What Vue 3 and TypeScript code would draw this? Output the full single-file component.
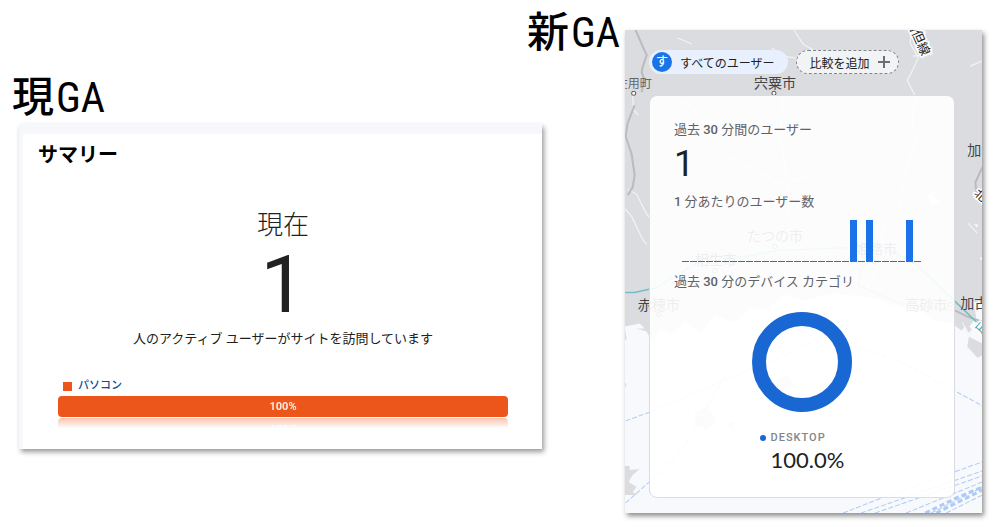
<script setup lang="ts">
interface MapLabel {
  text: string
  x: number
  y: number
  size: number
  rotate?: number
  color?: string
}

const labels: MapLabel[] = [
  { text: '佐用町', x: -9, y: 58, size: 12, color: '#666' },
  { text: '宍粟市', x: 129, y: 58, size: 14 },
  { text: '加', x: 342, y: 125, size: 14 },
  { text: 'たつの市', x: 122, y: 211, size: 14 },
  { text: '相生市', x: 70, y: 235, size: 14 },
  { text: '姫路市', x: 230, y: 224, size: 14 },
  { text: '赤穂市', x: 13, y: 279, size: 14 },
  { text: '高砂市', x: 280, y: 279, size: 14 },
  { text: '加古川', x: 335, y: 277, size: 14 },
]

const roadLabels: MapLabel[] = [
  { text: '播但線', x: 281, y: -9, size: 13, rotate: 66 },
  { text: '北条', x: 348, y: 164, size: 12, rotate: 42 },
]

const towns: [number, number][] = [[9, 63], [149, 63], [150, 216], [90, 240], [249, 231], [34, 284], [325, 274]]

const usersPerMinute: number[] = Array.from({ length: 30 }, (_, i) => ([21, 23, 28].includes(i) ? 1 : 0))
</script>

<template>
  <main class="page">
    <section class="current">
      <h1 class="heading">現<span class="latin">GA</span></h1>
      <div class="summary">
        <div class="summary-body">
          <h2 class="summary-title">サマリー</h2>
          <div class="realtime">
            <p class="now">現在</p>
            <p class="count">1</p>
            <p class="note">人のアクティブ ユーザーがサイトを訪問しています</p>
          </div>
          <div class="device">
            <p class="legend"><span class="swatch"></span>パソコン</p>
            <div class="meter">100%</div>
          </div>
        </div>
      </div>
    </section>

    <h1 class="heading next-heading">新<span class="latin">GA</span></h1>
    <section class="next">
      <svg class="map" viewBox="0 0 357 482" preserveAspectRatio="xMidYMid slice" aria-hidden="true">
        <rect width="357" height="482" fill="#f7f9fc" />
        <path
          fill="#dadce0"
          d="M0 0H357V270L348 272 351 287 344 296 357 310V325L352 327 342 316 344 303 340 296 336 300 326 292 310 290 296 281 270 275 250 268 230 265 205 263 180 270 160 264 140 280 125 276 110 292 90 285 75 303 60 290 48 304 35 299 28 312 22 301 12 298 5 306 0 310Z"
        />
        <path fill="#dadce0" d="M0 351 2 354 0 357ZM0 435H5V439L15 438 8 444 4 451 12 456 8 461 12 463V464H0ZM70 382 82 376 92 390 82 399 70 394ZM100 394 108 390 110 398ZM145 352 163 344 170 355 155 362Z" />
        <g fill="none" stroke="#f2f3f5" stroke-width="1.2">
          <path d="M286 0 285 13 293 28 286 43 282 50 290 66 287 90 291 112 280 142 274 178 258 195 255 230 240 262" />
          <path d="M169 0 178 14 188 20M147 18 157 26 172 28 188 19M53 8 67 14M42 65 68 76 97 124 126 137 151 152 182 147" />
          <path d="M157 66 156 112 162 151 165 197 148 220 M3 159 12 164 21 182 26 189M0 178 7 186 18 209 22 214M8 65 9 80 14 85" />
          <path d="M288 26 308 24M345 36 357 31M301 1 296 12M343 193 352 203M344 306 337 292" />
        </g>
        <g fill="none" stroke="#b9bbbf" stroke-width="2">
          <path d="M11 0 17 14 22 25 18 37 17 42 20 50 17 62 M10 75 3 93 1 106 7 124 10 145 8 157 3 165" />
          <path d="M357 137 350 152 351 161 357 170M330 280 342 286 357 291 M239 229 233 255 275 273 300 277 330 280" />
        </g>
        <path d="M0 262H10L32 257 83 226 122 226 151 220 228 217 260 217 290 233 330 271 357 297" fill="none" stroke="#70bfc4" stroke-width="1.6" />
        <path d="m302 166 6-6 1 7 7 4-9 3-3-4ZM342 119l4 2-2 3ZM348 194l5 0-1 3ZM354 228l3-2v4ZM0 296l15-3 5 5-8 0-3 9-7 1ZM342 305l9-14 6 13v9Z" fill="#f7f9fc" />
        <g fill="none" stroke="#adcbf7" stroke-width="1" stroke-dasharray="5 2">
          <path d="M1 390 26 381 80 358 165 322 223 292M1 472 28 448 57 420 102 342M223 315 268 327 357 375" />
          <path d="M218 482 254 468 357 431M236 482 357 440M250 482 357 445M281 482 357 451M321 482 357 464M306 482 357 456" />
        </g>
        <path d="M300 482 331 467 357 456M311 482 357 459" fill="none" stroke="#adcbf7" stroke-width="3" stroke-dasharray="5 3" />
        <g class="map-text">
          <text v-for="l in labels" :key="l.text" :x="l.x" :y="l.y" :font-size="l.size" :fill="l.color ?? '#424447'">{{ l.text }}</text>
          <text
            v-for="l in roadLabels"
            :key="l.text"
            :x="l.x"
            :y="l.y"
            :font-size="l.size"
            :transform="`rotate(${l.rotate} ${l.x} ${l.y})`"
            class="road"
          >{{ l.text }}</text>
          <text x="349" y="296" font-size="12" fill="#3ba3ab" transform="rotate(42 349 296)" class="rail">山陽</text>
        </g>
        <circle v-for="[cx, cy] in towns" :key="`${cx}-${cy}`" :cx="cx" :cy="cy" r="2" fill="#fff" stroke="#5f6368" />
      </svg>

      <div class="chips">
        <button type="button" class="chip selected"><span class="avatar">す</span>すべてのユーザー</button>
        <button type="button" class="chip add">
          比較を追加
          <svg width="14" height="14" viewBox="0 0 14 14" aria-hidden="true"><path d="M7 1V13M1 7H13" stroke="#6b6e73" stroke-width="2" /></svg>
        </button>
      </div>

      <article class="card">
        <h2 class="label">過去 <b>30</b> 分間のユーザー</h2>
        <p class="users">1</p>
        <h2 class="label"><b>1</b> 分あたりのユーザー数</h2>
        <div class="bars">
          <span v-for="(n, i) in usersPerMinute" :key="i" class="bar" :class="{ active: n > 0 }"></span>
        </div>
        <h2 class="label">過去 <b>30</b> 分のデバイス カテゴリ</h2>
        <svg class="donut" width="100" height="100" viewBox="0 0 100 100" aria-hidden="true">
          <circle cx="50" cy="50" r="43" fill="none" stroke="#1967d2" stroke-width="14" />
        </svg>
        <div class="category">
          <p class="category-name"><span class="dot"></span>DESKTOP</p>
          <p class="share">100.0%</p>
        </div>
      </article>
    </section>
  </main>
</template>

<style>
body {
  background: #fff;
}
</style>

<style scoped>
.page {
  display: grid;
  grid-template-columns: 12px 515fr 15px 83px 357fr 18px;
  align-items: start;
  padding-bottom: 15px;
  overflow: hidden;
  font-family: Roboto, "Noto Sans CJK JP", sans-serif;
  color: #212121;
}

h1,
h2,
p {
  margin: 0;
  font-weight: 400;
}

.heading {
  font-family: "Noto Sans CJK JP", sans-serif;
  font-size: 42px;
  font-weight: 500;
  line-height: 48px;
  color: #000;
  white-space: nowrap;
}

.latin {
  margin-left: 2px;
  font-family: "Liberation Sans Narrow", "Roboto Condensed", "Noto Sans CJK JP", sans-serif;
  font-weight: 400;
}

.current {
  grid-column: 2 / 4;
  grid-row: 1;
  padding-top: 70px;
}

.summary {
  margin: 2px 0 0 7px;
  padding: 10px 0 0 4px;
  background: #f7f8fb;
  box-shadow: 2px 3px 5px rgba(0, 0, 0, 0.4);
}

.summary-body {
  padding: 9px 34px 22px 15px;
  background: #fff;
}

.summary-title {
  font-size: 20px;
  font-weight: 700;
  line-height: 24px;
  color: #000;
}

.realtime {
  padding: 42px 0 27px 20px;
  text-align: center;
}

.now {
  font-size: 26px;
  font-weight: 300;
  line-height: 32px;
}

.count {
  font-size: 80px;
  line-height: 88px;
}

.note {
  font-size: 13px;
  line-height: 20px;
}

.device {
  padding-left: 20px;
}

.legend {
  display: flex;
  align-items: center;
  gap: 6px;
  padding-left: 5px;
  font-size: 11px;
  font-weight: 500;
  line-height: 20px;
  color: #0b4f9c;
}

.swatch {
  width: 9px;
  height: 9px;
  background: #ed561b;
}

.meter {
  margin-bottom: 10px;
  border-radius: 4px;
  background: #ed561b;
  color: #f5e9e4;
  font-size: 11px;
  font-weight: 700;
  line-height: 21px;
  text-align: center;
  -webkit-box-reflect: below 1px linear-gradient(transparent 50%, rgba(0, 0, 0, 0.35));
}

.next-heading {
  grid-column: 3 / 5;
  grid-row: 1;
  padding-top: 5px;
}

.next {
  grid-column: 5;
  grid-row: 1;
  position: relative;
  margin-top: 30px;
  padding: 20px 27px 15px 24px;
  background: #dadce0;
  box-shadow: 2px 3px 5px rgba(0, 0, 0, 0.45);
}

.map {
  position: absolute;
  inset: 0;
  width: 100%;
  height: 100%;
}

.map-text {
  font-family: "Noto Sans CJK JP", sans-serif;
}

.road,
.rail {
  paint-order: stroke;
  stroke: #fff;
  stroke-width: 3px;
}

.road {
  fill: #222;
}

.chips {
  position: relative;
  display: flex;
  gap: 8px;
}

.chip {
  display: flex;
  align-items: center;
  gap: 8px;
  height: 24px;
  padding: 0 14px 0 3px;
  border: 0;
  border-radius: 12px;
  background: #e8f0fe;
  color: #202124;
  font: inherit;
  font-size: 12px;
  white-space: nowrap;
}

.avatar {
  width: 20px;
  height: 20px;
  border-radius: 50%;
  background: #1a73e8;
  color: #fff;
  font-weight: 500;
  line-height: 20px;
  text-align: center;
}

.add {
  padding: 0 7px 0 12px;
  border: 1px dashed #80868b;
  background: #f1f3f4;
}

.card {
  position: relative;
  display: flex;
  flex-direction: column;
  margin-top: 21px;
  padding: 24px;
  border: 1px solid #dadce0;
  border-radius: 8px;
  background: rgba(255, 255, 255, 0.91);
}

.label {
  font-size: 13px;
  line-height: 20px;
  color: #5f6368;
}

.label b {
  font-weight: 500;
}

.users {
  padding: 2px 0 6px;
  font-size: 36px;
  line-height: 44px;
  color: #202124;
}

.bars {
  display: flex;
  align-items: flex-end;
  gap: 1px;
  height: 42px;
  margin: 8px 0 10px 8px;
}

.bar {
  flex: 0 0 7px;
  height: 1px;
  background: #1a73e8;
}

.bar.active {
  height: 42px;
}

.donut {
  align-self: center;
  margin-top: 20px;
}

.category {
  align-self: center;
  margin-top: 17px;
}

.category-name {
  display: flex;
  align-items: center;
  gap: 5px;
  font-size: 11px;
  font-weight: 500;
  line-height: 18px;
  letter-spacing: 1px;
  color: #80868b;
}

.dot {
  width: 6px;
  height: 6px;
  border-radius: 50%;
  background: #1967d2;
}

.share {
  padding-left: 11px;
  font-family: Lato, sans-serif;
  font-size: 22px;
  line-height: 26px;
  color: #202124;
}
</style>
